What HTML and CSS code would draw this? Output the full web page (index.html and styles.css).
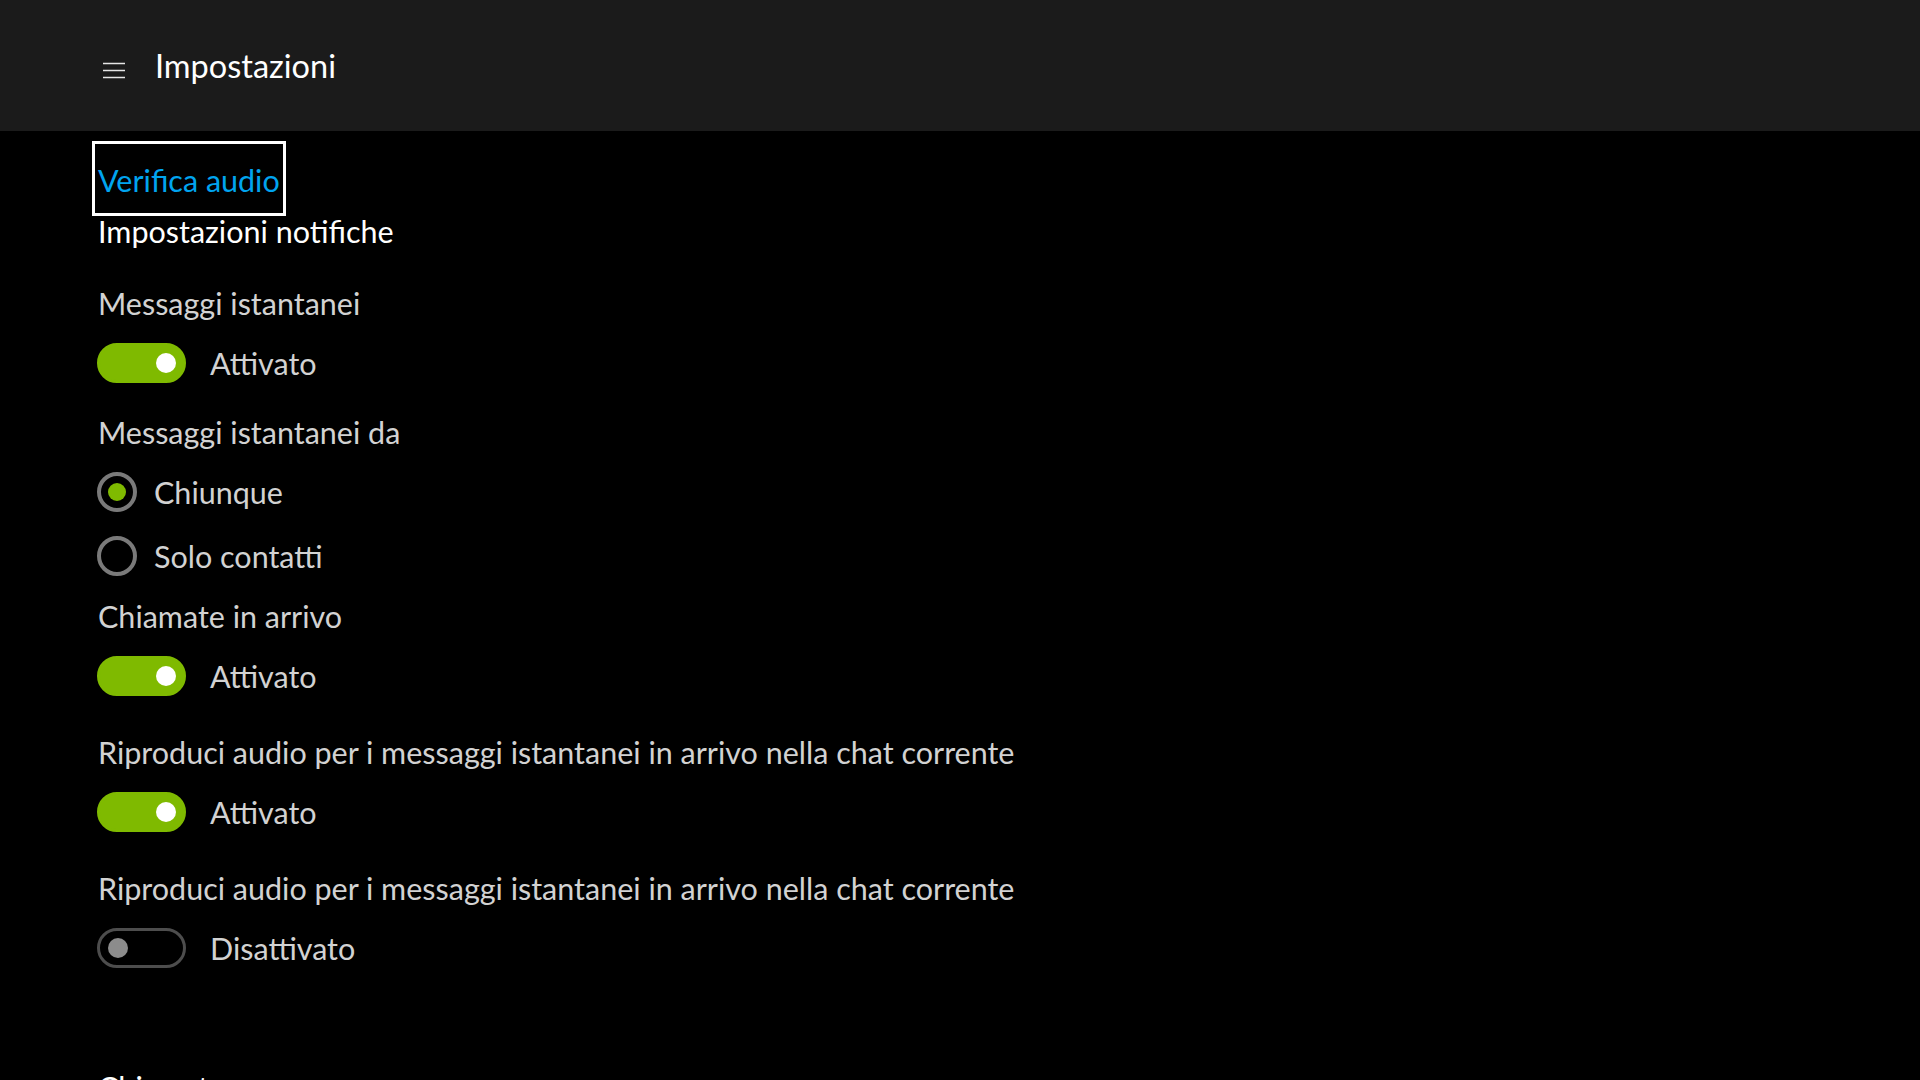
FILE: index.html
```html
<!DOCTYPE html>
<html lang="it">
  <head>
    <meta charset="utf-8" />
    <link rel="stylesheet" href="styles.css">
  </head>
  <body>
    <!-- Barra del titolo -->
    <div class="topbar">
      <svg class="menu-icon" width="22" height="17" viewBox="0 0 22 17">
        <path d="M0 1.5H22M0 8.5H22M0 15.5H22" stroke="#e6e6e6" stroke-width="1.6" fill="none" />
      </svg>
      <h1 class="page-title">Impostazioni</h1>
    </div>

    <div class="content">
      <div class="focus-row">
        <a class="link-focus">Verifica audio</a>
      </div>

      <h2 class="section-title">Impostazioni notifiche</h2>

      <div class="label first">Messaggi istantanei</div>
      <div class="toggle-row">
        <span class="toggle on"><span class="knob"></span></span>
        <span class="toggle-text">Attivato</span>
      </div>

      <div class="label">Messaggi istantanei da</div>
      <div class="radio-row">
        <span class="radio checked"><span class="dot"></span></span>
        <span class="radio-text">Chiunque</span>
      </div>
      <div class="radio-row second">
        <span class="radio"></span>
        <span class="radio-text">Solo contatti</span>
      </div>

      <div class="label calls">Chiamate in arrivo</div>
      <div class="toggle-row">
        <span class="toggle on"><span class="knob"></span></span>
        <span class="toggle-text">Attivato</span>
      </div>

      <div class="label long">Riproduci audio per i messaggi istantanei in arrivo nella chat corrente</div>
      <div class="toggle-row">
        <span class="toggle on"><span class="knob"></span></span>
        <span class="toggle-text">Attivato</span>
      </div>

      <div class="label long">Riproduci audio per i messaggi istantanei in arrivo nella chat corrente</div>
      <div class="toggle-row">
        <span class="toggle"><span class="knob"></span></span>
        <span class="toggle-text">Disattivato</span>
      </div>

      <h2 class="section-title next">Chiamate</h2>
    </div>
  </body>
</html>
```

FILE: styles.css
```css
body {
  margin: 0;
  background: #000;
  color: #d2d2d2;
  font-family: Lato, "Noto Sans", sans-serif;
  font-size: 30.5px;
  overflow: hidden;
  height: 1080px;
}

.topbar {
  height: 131px;
  background: #1b1b1b;
  display: flex;
  align-items: center;
  padding-left: 103px;
}

.menu-icon {
  margin-top: 10px;
}

.page-title {
  margin: 0 0 0 30px;
  font-size: 32.5px;
  font-weight: normal;
  color: #fff;
}

.content {
  padding-left: 98px;
}

.focus-row {
  margin-top: 10px;
  margin-left: -6px;
}

.link-focus {
  display: inline-flex;
  align-items: center;
  box-sizing: border-box;
  height: 75px;
  padding: 2px 3px 0;
  border: 3px solid #fff;
  color: #00a4ef;
}

.section-title {
  margin: 0;
  height: 32px;
  line-height: 31px;
  font-size: 30.5px;
  font-weight: normal;
  color: #fff;
}

.section-title.next {
  margin-top: 104px;
}

.label {
  height: 40px;
  line-height: 38px;
  margin-top: 30px;
  white-space: nowrap;
}

.label.first {
  margin-top: 36px;
}

.label.calls {
  margin-top: 21px;
}

.label.long {
  margin-top: 37px;
}

/* Interruttori */
.toggle-row {
  display: flex;
  align-items: center;
  height: 40px;
  margin-top: 19px;
  margin-left: -1px;
}

.toggle {
  position: relative;
  box-sizing: border-box;
  width: 89px;
  height: 40px;
  border-radius: 20px;
  border: 3px solid #4d4d4d;
}

.toggle .knob {
  position: absolute;
  top: 7px;
  left: 8px;
  width: 20px;
  height: 20px;
  border-radius: 50%;
  background: #8c8c8c;
}

.toggle.on {
  background: #7fba00;
  border-color: #7fba00;
}

.toggle.on .knob {
  left: auto;
  right: 7px;
  background: #fff;
}

.toggle-text {
  margin-left: 24px;
}

/* Bottoni radio */
.radio-row {
  display: flex;
  align-items: center;
  height: 40px;
  margin-top: 19px;
  margin-left: -1px;
}

.radio-row.second {
  margin-top: 24px;
}

.radio {
  box-sizing: border-box;
  width: 40px;
  height: 40px;
  border-radius: 50%;
  border: 4px solid #7a7a7a;
  display: flex;
  align-items: center;
  justify-content: center;
}

.radio .dot {
  width: 18px;
  height: 18px;
  border-radius: 50%;
  background: #7fba00;
}

.radio-text {
  margin-left: 17px;
}
```
